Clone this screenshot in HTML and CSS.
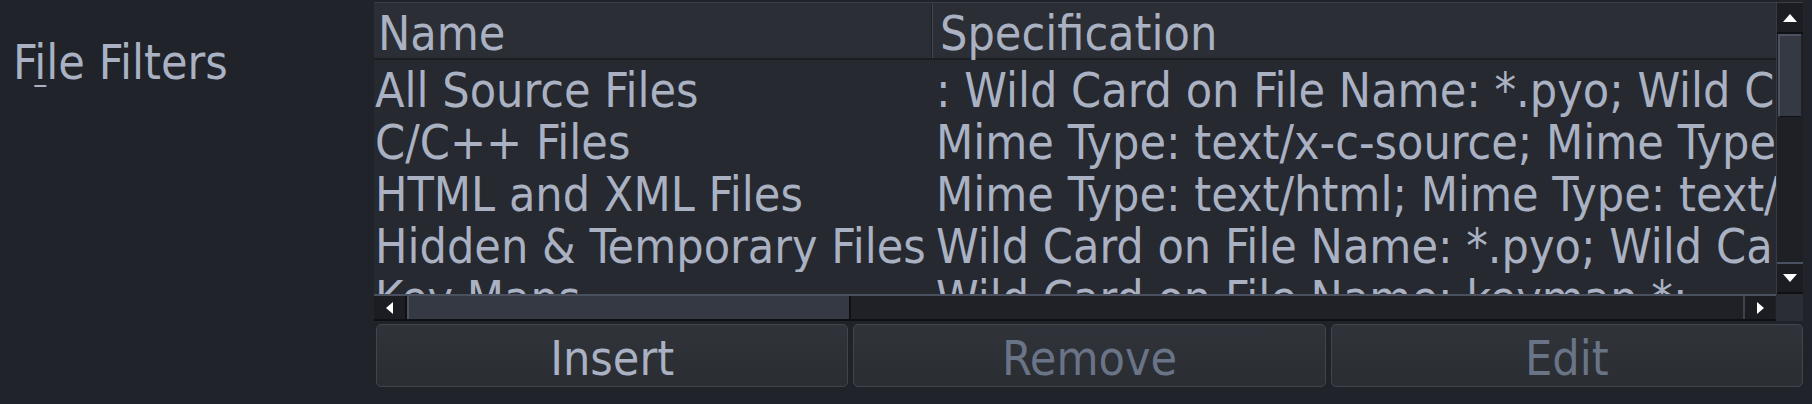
FILE: index.html
```html
<!DOCTYPE html>
<html>
<head>
<meta charset="utf-8">
<link rel="stylesheet" href="styles.css">
</head>
<body>
<div class="dialog">
  <div class="label">F<span class="mnemonic">i</span>le Filters</div>
  <div class="panel">
    <div class="scrollpane">
      <div class="viewport">
        <div class="thead">
          <div class="th th-name">Name</div>
          <div class="th th-spec">Specification</div>
        </div>
        <div class="tbody">
          <div class="row"><div class="c-name">All Source Files</div><div class="c-spec">: Wild Card on File Name: *.pyo; Wild Card on File Name: *.pyc; Wild Card on File Name: *.o</div></div>
          <div class="row"><div class="c-name">C/C++ Files</div><div class="c-spec">Mime Type: text/x-c-source; Mime Type: text/x-c++src; Mime Type: text/x-chdr</div></div>
          <div class="row"><div class="c-name">HTML and XML Files</div><div class="c-spec">Mime Type: text/html; Mime Type: text/xml; Mime Type: application/xml</div></div>
          <div class="row"><div class="c-name">Hidden &amp; Temporary Files</div><div class="c-spec">Wild Card on File Name: *.pyo; Wild Card on File Name: *.pyc; Wild Card on File Name: *~</div></div>
          <div class="row"><div class="c-name">Key Maps</div><div class="c-spec">Wild Card on File Name: keymap.*;</div></div>
        </div>
      </div>
      <div class="vscroll">
        <div class="arrow-btn up-btn">
          <svg width="14" height="8" viewBox="0 0 14 8"><polygon points="7,0 14,8 0,8" fill="#ffffff"/></svg>
        </div>
        <div class="vtrack"><div class="vthumb"></div></div>
        <div class="arrow-btn down-btn">
          <svg width="14" height="8" viewBox="0 0 14 8"><polygon points="0,0 14,0 7,8" fill="#ffffff"/></svg>
        </div>
      </div>
      <div class="hscroll">
        <div class="harrow left-btn">
          <svg width="7" height="12" viewBox="0 0 7 12"><polygon points="7,0 7,12 0,6" fill="#ffffff"/></svg>
        </div>
        <div class="htrack"><div class="hthumb"></div></div>
        <div class="harrow right-btn">
          <svg width="7" height="12" viewBox="0 0 7 12"><polygon points="0,0 7,6 0,12" fill="#ffffff"/></svg>
        </div>
      </div>
      <div class="corner"></div>
    </div>
    <div class="buttons">
      <div class="btn">Insert</div>
      <div class="btn disabled">Remove</div>
      <div class="btn disabled">Edit</div>
    </div>
  </div>
</div>
</body>
</html>
```

FILE: styles.css
```css
html, body {
  margin: 0;
  padding: 0;
  background: #20232a;
}

body {
  width: 1812px;
  height: 404px;
  overflow: hidden;
  font-family: "DejaVu Sans Condensed", "DejaVu Sans", "Liberation Sans", sans-serif;
  font-stretch: condensed;
  font-size: 48px;
  color: #a9b1c2;
}

.dialog {
  display: flex;
  align-items: flex-start;
}

.label {
  width: 374px;
  box-sizing: border-box;
  padding-left: 13px;
  margin-top: 36px;
  line-height: 52px;
  white-space: nowrap;
}

.mnemonic {
  text-decoration: underline;
  text-decoration-thickness: 2px;
  text-underline-offset: 6px;
}

.panel {
  width: 1429px;
  margin-top: 2px;
  display: flex;
  flex-direction: column;
}

.scrollpane {
  border-top: 1px solid #3a3e47;
  display: grid;
  grid-template-columns: 1402px 27px;
  grid-template-rows: 291px 27px;
}

.viewport {
  background: #262930;
  overflow: hidden;
}

.thead {
  display: flex;
  height: 57px;
  box-sizing: border-box;
  background: #2b2e34;
  border-bottom: 2px solid #1c1e22;
  line-height: 52px;
}

.th {
  padding-top: 4px;
  white-space: nowrap;
  box-sizing: border-box;
}

.th-name {
  width: 559px;
  flex: none;
  padding-left: 4px;
  border-right: 1px solid #43474f;
  box-shadow: inset -1px 0 0 #1f2126;
}

.th-spec {
  padding-left: 7px;
}

.tbody {
  padding-top: 4px;
}

.row {
  display: flex;
  height: 52px;
  line-height: 52px;
  white-space: nowrap;
}

.c-name {
  width: 559px;
  flex: none;
  box-sizing: border-box;
  padding-left: 1px;
  overflow: hidden;
}

.c-spec {
  flex: none;
  padding-left: 3px;
}

/* vertical scrollbar */
.vscroll {
  display: flex;
  flex-direction: column;
  background: #1e2026;
  border-left: 1px solid #363a43;
  box-sizing: border-box;
}

.arrow-btn {
  display: flex;
  align-items: center;
  justify-content: center;
  background: #1b1d22;
  flex: none;
}

.up-btn {
  height: 29px;
  border-bottom: 2px solid #0f1013;
}

.vtrack {
  flex: 1;
  display: flex;
  flex-direction: column;
  padding-right: 2px;
}

.vthumb {
  height: 83px;
  margin-left: 1px;
  box-sizing: border-box;
  background: #343944;
  border-top: 2px solid #4c5261;
  border-left: 2px solid #4c5261;
  border-bottom: 1px solid #101114;
}

.down-btn {
  height: 32px;
  box-sizing: border-box;
  border-top: 2px solid #4b5160;
  border-bottom: 2px solid #0f1013;
}

/* horizontal scrollbar */
.hscroll {
  display: flex;
  background: #1f2127;
  border-top: 2px solid #4a505d;
  border-bottom: 2px solid #0f1013;
}

.harrow {
  display: flex;
  align-items: center;
  justify-content: center;
  background: #1b1d22;
  flex: none;
}

.left-btn {
  width: 31px;
  border-right: 2px solid #101114;
}

.htrack {
  flex: 1;
  display: flex;
}

.hthumb {
  width: 444px;
  box-sizing: border-box;
  background: #343944;
  border-left: 2px solid #4b5262;
  border-right: 2px solid #0f1013;
}

.right-btn {
  width: 30px;
  border-left: 2px solid #3d424c;
  margin-right: 1px;
}

.corner {
  background: #2a2d33;
}

/* buttons */
.buttons {
  display: flex;
  gap: 5px;
  margin-top: 3px;
  margin-left: 2px;
}

.btn {
  flex: 1;
  height: 63px;
  box-sizing: border-box;
  border: 1px solid #41454d;
  border-radius: 5px;
  background: linear-gradient(#303339, #2a2d32);
  text-align: center;
  padding-top: 7px;
  line-height: 52px;
  color: #a9b1c2;
}

.btn.disabled {
  color: #6a7487;
}
```
